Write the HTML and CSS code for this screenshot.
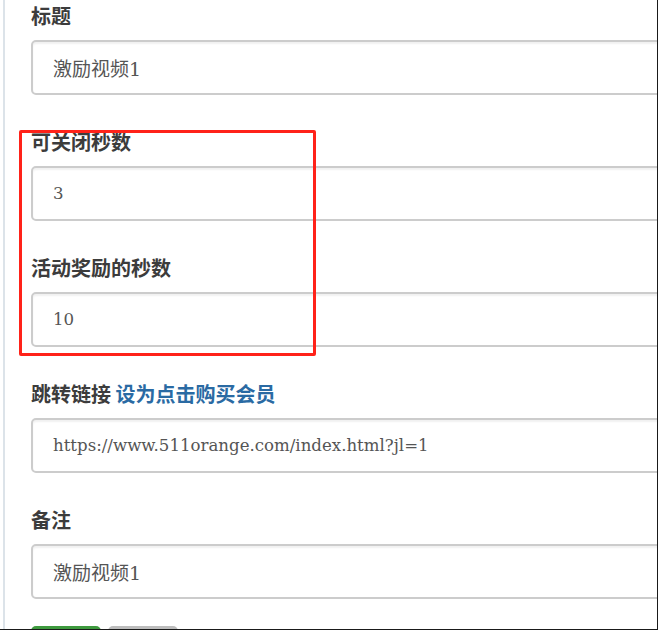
FILE: index.html
```html
<!DOCTYPE html>
<html lang="zh-CN">
<head>
    <meta charset="UTF-8" />
    <meta name="viewport" content="width=device-width, initial-scale=1" />
    <title>编辑激励视频</title>
    <link rel="stylesheet" href="styles.css">
</head>
<body>
    <div class="frame">
        <form class="ad-form">
            <div class="form-group">
                <label for="title">标题</label>
                <input type="text" id="title" value="激励视频1" />
            </div>

            <div class="form-group">
                <label for="closeSeconds">可关闭秒数</label>
                <input type="text" id="closeSeconds" class="latin" value="3" />
            </div>

            <div class="form-group">
                <label for="rewardSeconds">活动奖励的秒数</label>
                <input type="text" id="rewardSeconds" class="latin" value="10" />
            </div>

            <div class="form-group">
                <label for="jumpUrl">跳转链接 <a href="#" class="link">设为点击购买会员</a></label>
                <input type="text" id="jumpUrl" class="latin" value="https://www.511orange.com/index.html?jl=1" />
            </div>

            <div class="form-group">
                <label for="remark">备注</label>
                <input type="text" id="remark" value="激励视频1" />
            </div>

            <div class="actions">
                <button type="submit" class="btn btn-save">保存</button>
                <button type="button" class="btn btn-back">返回</button>
            </div>

            <!-- annotation box -->
            <div class="highlight"></div>
        </form>
    </div>
</body>
</html>
```

FILE: styles.css
```css
body {
    margin: 0;
    background-color: #FFFFFF;
    font-family: "Noto Sans CJK SC", "Noto Sans", sans-serif;
    color: #333;
}
.frame {
    width: 658px;
    height: 630px;
    box-sizing: border-box;
    border-right: 1px solid #1A1A1A;
    border-bottom: 1px solid #1A1A1A;
    overflow: hidden;
}
.ad-form {
    position: relative;
    margin-left: 3px;
    border-left: 2px solid #DCE3E9;
    padding: 4px 0 0 26px;
    min-height: 700px;
}
.form-group {
    margin-bottom: 35px;
}
.form-group label {
    display: block;
    font-size: 20px;
    font-weight: 700;
    line-height: 24px;
    color: #3C3C3C;
    margin-bottom: 12px;
}
.form-group .link {
    color: #2A6AA3;
    text-decoration: none;
}
input {
    display: block;
    width: 700px;
    height: 55px;
    box-sizing: border-box;
    padding: 0 20px;
    font-family: "DejaVu Serif", "Noto Sans CJK SC", serif;
    font-size: 19px;
    color: #555;
    background-color: #FFFFFF;
    border: 2px solid #CCCCCC;
    border-radius: 5px;
    box-shadow: inset 0 2px 2px rgba(0,0,0,0.06);
    outline: none;
}
input.latin {
    font-size: 16.6px;
}
.actions {
    display: flex;
    gap: 7px;
    margin-top: -8px;
}
.btn {
    width: 70px;
    height: 34px;
    border: none;
    border-radius: 5px;
    font-size: 16px;
    color: #fff;
}
.btn-save {
    background-color: #3E9A3E;
}
.btn-back {
    background-color: #BDBDBD;
}
.highlight {
    position: absolute;
    left: 14px;
    top: 130px;
    width: 291px;
    height: 220px;
    border: 3px solid #FF2219;
    border-radius: 2px;
}
```
